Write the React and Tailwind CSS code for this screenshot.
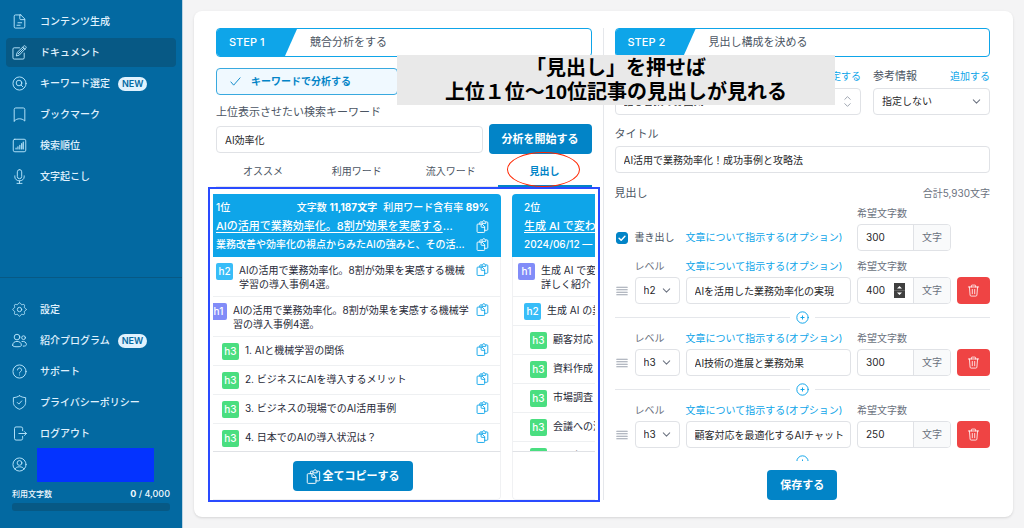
import { useId, useState } from "react";
import clsx from "clsx";

const Icon = ({ children, className = "w-[15px] h-[15px]", strokeWidth = 1.5 }) => (
  <svg
    viewBox="0 0 24 24"
    fill="none"
    stroke="currentColor"
    strokeWidth={strokeWidth}
    strokeLinecap="round"
    strokeLinejoin="round"
    className={`shrink-0 ${className}`}
    aria-hidden="true"
  >
    {children}
  </svg>
);

// eight-lobed cog outline
const cogPath =
  Array.from({ length: 96 }, (_, i) => {
    const t = (i / 96) * Math.PI * 2;
    const r = 9.6 + 1.2 * Math.cos(8 * t);
    return `${i ? "L" : "M"}${(12 + r * Math.cos(t)).toFixed(2)} ${(12 + r * Math.sin(t)).toFixed(2)}`;
  }).join("") + "Z";

const icons = {
  document: (
    <>
      <path d="M14 1.5H5.5A2 2 0 0 0 3.5 3.5v17a2 2 0 0 0 2 2h13a2 2 0 0 0 2-2V8L14 1.5Z" />
      <path d="M12.5 1.8v5.7a1.5 1.5 0 0 0 1.5 1.5h6" />
      <path d="M9.5 14h6M8 18h5" />
    </>
  ),
  edit: (
    <>
      <path d="M12 4.5H3.5a2 2 0 0 0-2 2v14a2 2 0 0 0 2 2h14a2 2 0 0 0 2-2V13" />
      <path d="m7 17 1.2-5L18.8 1.8a1.8 1.8 0 0 1 2.6 0l.7.7a1.8 1.8 0 0 1 0 2.6L12 15.8Z" />
      <path d="m17.5 3.5 3.5 3.5M10 14 19 5" />
    </>
  ),
  searchCircle: (
    <>
      <circle cx="12" cy="12" r="10.5" />
      <circle cx="11.2" cy="11.2" r="4.5" />
      <path d="m14.5 14.5 3 3" />
    </>
  ),
  bookmark: <path d="M3.5 22.5V4A2.5 2.5 0 0 1 6 1.5h12A2.5 2.5 0 0 1 20.5 4v18.5C18 20 15 18.8 12 18.8S6 20 3.5 22.5Z" />,
  chart: (
    <>
      <rect x="2" y="2" width="20" height="20" rx="2.5" />
      <path d="M6.5 17.5V16M9.5 17.5V14M12.500 17.5v-6M15.5 17.5V9M18 17.5v-11" strokeWidth="1.8" />
    </>
  ),
  mic: (
    <>
      <rect x="8.5" y="1" width="7" height="14.5" rx="3.5" />
      <path d="M4.5 11v1.500a7.5 6.5 0 0 0 15 0V11M12 19v4M8 23h8" />
    </>
  ),
  cog: (
    <>
      <path d={cogPath} />
      <circle cx="12" cy="12" r="3.5" />
    </>
  ),
  users: (
    <>
      <circle cx="8" cy="6.5" r="4.5" />
      <path d="M1 19.5c0-4 3-6 7-6s7 2 7 6c0 1.8-1.5 2.5-7 2.5s-7-.7-7-2.5Z" />
      <circle cx="18.5" cy="7.5" r="3" />
      <path d="M16 13.5c4-.8 7 1.5 7 5 0 1.8-1.5 2.5-5 2.5" />
    </>
  ),
  help: (
    <>
      <circle cx="12" cy="12" r="10.5" />
      <path d="M8.8 9.5a3.2 3.2 0 1 1 4.8 2.7c-1 .6-1.6 1.2-1.6 2.3M12 17.5v.1" />
    </>
  ),
  shield: (
    <>
      <path d="M12 1.2c2.8 1.8 6 2.8 9.8 3V12c0 5-4 8.500-9.800 10.800C6.2 20.5 2.2 17 2.2 12V4.200c3.800-.2 7-1.200 9.800-3Z" />
      <path d="m8.500 12 2.500 2.500 4.500-5" />
    </>
  ),
  logout: (
    <>
      <path d="M17 7.5V4a2.5 2.5 0 0 0-2.5-2.500H6.5A2.5 2.5 0 0 0 4 4v16a2.5 2.5 0 0 0 2.5 2.500h8A2.5 2.5 0 0 0 17 20v-3.500" />
      <path d="M11 12h12m-3-3 3 3-3 3" />
    </>
  ),
  userCircle: (
    <>
      <circle cx="12" cy="12" r="10.5" />
      <circle cx="12" cy="9.5" r="3.8" />
      <path d="M4.8 19.5c1-2.8 3.5-3.8 7.2-3.8s6.2 1 7.2 3.8" />
    </>
  ),
  copy: (
    <>
      <path d="M10.5 7.500H3.500A1.500 1.500 0 0 0 2 9v12.500A1.500 1.500 0 0 0 3.500 23h11a1.500 1.500 0 0 0 1.500-1.500V13Z" />
      <path d="M9.500 7.500v5a1 1 0 0 0 1 1H16" />
      <path d="M7 7.500V5a1.500 1.500 0 0 1 1.500-1.500H11M16 19h4a1.800 1.800 0 0 0 1.800-1.800V5a1.500 1.500 0 0 0-1.500-1.500H18" />
      <path d="M11 5.500c0-1.500.4-2.300 1.500-2.500.3-1.300 1-2 2-2s1.700.7 2 2c1.100.2 1.500 1 1.500 2.500Z" />
    </>
  ),
  trash: (
    <>
      <path d="M2.500 5.500h19M8 5.500v-2A1.500 1.500 0 0 1 9.500 2h5A1.500 1.500 0 0 1 16 3.500v2M4.500 5.500l1.200 15a2 2 0 0 0 2 1.800h8.600a2 2 0 0 0 2-1.800l1.200-15" />
      <path d="M9.800 10v8M14.200 10v8" />
    </>
  ),
  plus: (
    <>
      <circle cx="12" cy="12" r="10.5" />
      <path d="M12 9v6M9 12h6" />
    </>
  ),
};

const mainMenu = [
  { icon: "document", label: "コンテンツ生成" },
  { icon: "edit", label: "ドキュメント", active: true },
  { icon: "searchCircle", label: "キーワード選定", isNew: true },
  { icon: "bookmark", label: "ブックマーク" },
  { icon: "chart", label: "検索順位" },
  { icon: "mic", label: "文字起こし" },
];

const subMenu = [
  { icon: "cog", label: "設定" },
  { icon: "users", label: "紹介プログラム", isNew: true },
  { icon: "help", label: "サポート" },
  { icon: "shield", label: "プライバシーポリシー" },
  { icon: "logout", label: "ログアウト" },
];

const tabs = ["オススメ", "利用ワード", "流入ワード", "見出し"];

const articles = [
  {
    rank: "1位",
    count: "11,187文字",
    rate: "89%",
    title: "AIの活用で業務効率化。8割が効果を実感する",
    ellipsis: true,
    description: "業務改善や効率化の視点からみたAIの強みと、その活…",
    headings: [
      { level: "h2", text: "AIの活用で業務効率化。8割が効果を実感する機械\n学習の導入事例4選。" },
      { level: "h1", text: "AIの活用で業務効率化。8割が効果を実感する機械学\n習の導入事例4選。" },
      { level: "h3", text: "1. AIと機械学習の関係" },
      { level: "h3", text: "2. ビジネスにAIを導入するメリット" },
      { level: "h3", text: "3. ビジネスの現場でのAI活用事例" },
      { level: "h3", text: "4. 日本でのAIの導入状況は？" },
    ],
  },
  {
    rank: "2位",
    title: "生成 AI で変わ",
    description: "2024/06/12 — 生",
    headings: [
      { level: "h1", text: "生成 AI で変\n詳しく紹介" },
      { level: "h2", text: "生成 AI の業" },
      { level: "h3", text: "顧客対応" },
      { level: "h3", text: "資料作成" },
      { level: "h3", text: "市場調査" },
      { level: "h3", text: "会議への活" },
      { level: "h3", text: "マーケ" },
    ],
  },
];

const outline = [
  { level: "h2", text: "AIを活用した業務効率化の実現", count: 400, focused: true },
  { level: "h3", text: "AI技術の進展と業務効果", count: 300 },
  { level: "h3", text: "顧客対応を最適化するAIチャット", count: 250 },
];

const levelStyles = {
  h1: "ml-[6px] bg-[#818cf8]",
  h2: "ml-[12px] bg-[#38bdf8]",
  h3: "ml-[18px] bg-[#4ade80]",
};

const fieldClass =
  "block h-[27px] w-full min-w-0 rounded-[4px] border border-[#e0e2e6] bg-white pl-[8px] pr-[4px] text-[10px] text-[#27272a] outline-none";

const MenuItem = ({ icon, label, active, isNew }) => (
  <a
    href="#"
    className={clsx(
      "flex h-[29px] items-center gap-[13px] rounded-[4px] px-[6px] text-[10px] font-medium text-[#e0f2fe]",
      active && "bg-[#075985]"
    )}
  >
    <span className="text-[#bae6fd]">
      <Icon>{icons[icon]}</Icon>
    </span>
    <span className="flex items-center gap-[8px] whitespace-nowrap">
      {label}
      {isNew && (
        <span className="rounded-full bg-[#e0f2fe] px-[4px] text-[9px] font-semibold leading-[14px] text-[#0369a1]">
          NEW
        </span>
      )}
    </span>
  </a>
);

const Sidebar = () => (
  <aside className="flex w-[183px] shrink-0 flex-col justify-between border-r border-[#bcd3e2] bg-[#0369a1]">
    <nav className="flex flex-col gap-[2px] px-[6px] pt-[7px]">
      {mainMenu.map((item) => (
        <MenuItem key={item.label} {...item} />
      ))}
    </nav>
    <div className="border-t border-[#075985] px-[6px] pb-[17px] pt-[17px]">
      <nav className="flex flex-col gap-[2px]">
        {subMenu.map((item) => (
          <MenuItem key={item.label} {...item} />
        ))}
        <div className="flex h-[29px] items-center gap-[10px] pl-[6px] text-[#bae6fd]">
          <Icon>{icons.userCircle}</Icon>
          <div className="h-[34px] w-[117px] shrink-0 bg-[#0433ff]" />
        </div>
      </nav>
      <div className="mt-[8px] px-[6px]">
        <div className="flex items-center justify-between text-[9px] font-medium leading-[14px] text-[#f0f9ff]">
          <span className="text-[8px]">利用文字数</span>
          <span>
            <strong>0</strong> / 4,000
          </span>
        </div>
        <div className="mt-[2px] h-[8px] rounded-[3px] bg-[#075985]" />
      </div>
    </div>
  </aside>
);

const StepBar = ({ step, title }) => (
  <div className="flex h-[29px] shrink-0 overflow-hidden rounded-[4px] border border-[#0ea5e9] bg-white text-[11px]">
    <div className="w-[80px] bg-[#0ea5e9] pl-[12px] font-medium leading-[27px] text-white [clip-path:polygon(0_0,100%_0,85%_100%,0_100%)]">
      {step}
    </div>
    <div className="pl-[13px] leading-[27px] text-[#4b5563]">{title}</div>
  </div>
);

const PrimaryButton = ({ children, className = "" }) => (
  <button
    type="button"
    className={`flex h-[30px] shrink-0 items-center justify-center gap-[2px] whitespace-nowrap rounded-[4px] bg-[#0284c7] px-[13px] text-[11px] font-bold text-white ${className}`}
  >
    {children}
  </button>
);

const Chevron = () => (
  <Icon className="pointer-events-none absolute right-[8px] top-[8px] h-[11px] w-[11px] text-[#6b7280]" strokeWidth={2.2}>
    <path d="m5 8.500 7 7 7-7" />
  </Icon>
);

const CopyButton = ({ className }) => (
  <button type="button" aria-label="コピー" className={`shrink-0 ${className}`}>
    <Icon className="h-[13px] w-[13px]" strokeWidth={1.7}>
      {icons.copy}
    </Icon>
  </button>
);

const ArticleCard = ({ article }) => (
  <article className="flex w-[297px] shrink-0 flex-col overflow-hidden rounded-[4px] bg-white">
    <header className="h-[63px] shrink-0 bg-[#0ea5e9] px-[12px] pt-[5px] text-[10px] text-white">
      <div className="flex justify-between font-medium leading-[16px]">
        <span>{article.rank}</span>
        {article.count && (
          <span className="flex gap-[6px]">
            <span>
              文字数 <strong>{article.count}</strong>
            </span>
            <span>
              利用ワード含有率 <strong>{article.rate}</strong>
            </span>
          </span>
        )}
      </div>
      <div className="mt-[2px] flex items-center justify-between leading-[18px]">
        <span className="whitespace-nowrap text-[11px] font-medium">
          <a href="#" className="underline underline-offset-2">
            {article.title}
          </a>
          {article.ellipsis && "…"}
        </span>
        <CopyButton className="text-white" />
      </div>
      <div className="flex items-center justify-between font-medium leading-[18px]">
        <span className="whitespace-nowrap">{article.description}</span>
        <CopyButton className="text-white" />
      </div>
    </header>
    <ul className="min-h-0 flex-1 overflow-y-auto border-x border-b border-x-[#f0f1f3] border-b-[#e0e2e6] [scrollbar-width:none]">
      {article.headings.map((heading) => (
        <li
          key={heading.level + heading.text}
          className="-ml-px flex items-start border-b border-[#eef0f2] pb-[5px] pr-[11px] pt-[6px]"
        >
          <span
            className={`h-[17px] w-[17px] shrink-0 rounded-[2px] text-center text-[10px] font-medium leading-[17px] text-white ${levelStyles[heading.level]}`}
          >
            {heading.level}
          </span>
          <p className="min-w-0 flex-1 whitespace-pre pl-[6px] text-[10px] leading-[14px] text-[#1f2937]">
            {heading.text}
          </p>
          <CopyButton className="text-[#0ea5e9]" />
        </li>
      ))}
    </ul>
    <footer className="flex shrink-0 justify-center rounded-b-[4px] border-x border-b border-[#f0f1f3] pb-[8px] pt-[9px]">
      <PrimaryButton>
        <Icon className="h-[15px] w-[15px]">{icons.copy}</Icon>
        全てコピーする
      </PrimaryButton>
    </footer>
  </article>
);

const AnalysisColumn = () => {
  const [keyword, setKeyword] = useState("AI効率化");
  const [activeTab, setActiveTab] = useState("見出し");

  return (
    <section className="flex min-w-0 flex-1 flex-col">
      <StepBar step="STEP 1" title="競合分析をする" />
      <div className="mt-[11px] grid grid-cols-2 gap-[11px]">
        <button
          type="button"
          className="flex h-[27px] items-center gap-[10px] rounded-[4px] border border-[#38a9df] bg-[#f0f9ff] pl-[13px] text-[10px] font-bold text-[#0284c7]"
        >
          <Icon className="h-[11px] w-[11px]" strokeWidth={2}>
            <path d="m2 13 6 7L22 4" />
          </Icon>
          キーワードで分析する
        </button>
      </div>
      <label htmlFor="keyword" className="mt-[9px] text-[11px] leading-[16px] text-[#4b5563]">
        上位表示させたい検索キーワード
      </label>
      <div className="mt-[4px] flex items-center gap-[6px]">
        <input
          id="keyword"
          className={fieldClass}
          value={keyword}
          onChange={(e) => setKeyword(e.target.value)}
        />
        <PrimaryButton>分析を開始する</PrimaryButton>
      </div>
      <div className="grid shrink-0 grid-cols-4 border-b border-[#e5e7eb]">
        {tabs.map((tab) => (
          <button
            key={tab}
            type="button"
            onClick={() => setActiveTab(tab)}
            className={clsx(
              "relative -mb-px h-[33px] border-b-2 pt-[3px] text-[10px]",
              tab === activeTab
                ? "border-[#0284c7] font-bold text-[#0284c7]"
                : "border-transparent text-[#4b5563]"
            )}
          >
            {tab}
            {tab === "見出し" && (
              <span className="absolute -top-[2px] left-[9px] h-[35px] w-[73px] rounded-[50%] border border-[#ff2600]" />
            )}
          </button>
        ))}
      </div>
      <div className="relative -mx-[3px] mt-[7px] flex min-h-0 flex-1 flex-col">
        <div className="flex min-h-0 flex-1 overflow-hidden">
          <div className="-ml-[9px] flex min-h-0 gap-[11px]">
            {articles.map((article) => (
              <ArticleCard key={article.rank} article={article} />
            ))}
          </div>
        </div>
        <div className="pointer-events-none absolute -inset-x-[5px] -bottom-[2px] -top-[7px] border-2 border-[#2a4bff]" />
      </div>
    </section>
  );
};

const CountField = ({ id, value, focused }) => (
  <div className="relative flex h-[27px] overflow-hidden rounded-[4px] border border-[#e0e2e6]">
    <input
      id={id}
      inputMode="numeric"
      defaultValue={value}
      className="w-[55px] min-w-0 px-[8px] text-[10px] text-[#27272a] outline-none"
    />
    <span className="flex-1 border-l border-[#e0e2e6] bg-[#f9fafb] text-center text-[10px] leading-[25px] text-[#6b7280]">
      文字
    </span>
    {focused && (
      <svg viewBox="0 0 11 15" className="absolute left-[36px] top-[5px] h-[15px] w-[11px]" aria-hidden="true">
        <rect width="11" height="15" fill="#404040" />
        <path d="M0 7.5h11" stroke="#606060" />
        <path d="M3 5.500 5.500 3 8 5.500ZM3 9.500 5.500 12 8 9.500Z" fill="#fff" />
      </svg>
    )}
  </div>
);

const rowGrid = "grid grid-cols-[14px_45px_minmax(0,1fr)_94px_33px] gap-x-[6px] items-center";
const smallLabel = "text-[10px] leading-[15px] text-[#6b7280] whitespace-nowrap";
const linkClass = "text-[10px] leading-[15px] text-[#0ea5e9] whitespace-nowrap";

const OutlineRow = ({ item }) => {
  const id = useId();

  return (
    <>
      <div className={`${rowGrid} gap-y-[3px]`}>
        <label htmlFor={`${id}-level`} className={`${smallLabel} col-start-2`}>
          レベル
        </label>
        <a href="#" className={linkClass}>
          文章について指示する(オプション)
        </a>
        <label htmlFor={`${id}-count`} className={`${smallLabel} col-span-2`}>
          希望文字数
        </label>
        <Icon className="h-[14px] w-[14px] text-[#9ca3af]" strokeWidth={1.8}>
          <path d="M3 5.500h18M3 9.800h18M3 14.200h18M3 18.500h18" />
        </Icon>
        <div className="relative">
          <select id={`${id}-level`} defaultValue={item.level} className={`${fieldClass} appearance-none`}>
            <option>h1</option>
            <option>h2</option>
            <option>h3</option>
          </select>
          <Chevron />
        </div>
        <input aria-label="見出しテキスト" className={fieldClass} defaultValue={item.text} />
        <CountField id={`${id}-count`} value={item.count} focused={item.focused} />
        <button
          type="button"
          aria-label="削除"
          className="flex h-[27px] items-center justify-center rounded-[4px] bg-[#ef4444] text-white"
        >
          <Icon className="h-[13px] w-[13px]">{icons.trash}</Icon>
        </button>
      </div>
      <div className="flex h-[27px] items-center gap-[6px]">
        <hr className="flex-1 border-[#e5e7eb]" />
        <button type="button" aria-label="見出しを追加" className="text-[#0ea5e9]">
          <Icon className="h-[13px] w-[13px]" strokeWidth={1.8}>
            {icons.plus}
          </Icon>
        </button>
        <hr className="flex-1 border-[#e5e7eb]" />
      </div>
    </>
  );
};

const OutlineColumn = () => (
  <section className="flex min-w-0 flex-1 flex-col">
    <StepBar step="STEP 2" title="見出し構成を決める" />
    <div className="mt-[11px] flex gap-[12px]">
      <div className="flex-1">
        <div className="flex h-[16px] items-center justify-end">
          <a href="#" className={linkClass}>
            設定する
          </a>
        </div>
        <div className="relative mt-[4px]">
          <select aria-label="雰囲気" className={`${fieldClass} appearance-none`}>
            <option>話し言葉の雰囲気</option>
          </select>
          <Icon className="pointer-events-none absolute right-[7px] top-[7px] h-[13px] w-[13px] text-[#9ca3af]" strokeWidth={1.8}>
            <path d="m7 8 5-5 5 5M7 16l5 5 5-5" />
          </Icon>
        </div>
      </div>
      <div className="w-[117px]">
        <div className="flex h-[16px] items-center justify-between">
          <label htmlFor="reference" className="text-[11px] text-[#4b5563]">
            参考情報
          </label>
          <a href="#" className={linkClass}>
            追加する
          </a>
        </div>
        <div className="relative mt-[4px]">
          <select id="reference" className={`${fieldClass} appearance-none`}>
            <option>指定しない</option>
          </select>
          <Chevron />
        </div>
      </div>
    </div>
    <label htmlFor="title" className="mt-[11px] text-[11px] leading-[16px] text-[#4b5563]">
      タイトル
    </label>
    <input
      id="title"
      className={`${fieldClass} mt-[4px] shrink-0`}
      defaultValue="AI活用で業務効率化！成功事例と攻略法"
    />
    <div className="mt-[12px] flex items-center justify-between leading-[16px]">
      <h2 className="text-[11px] text-[#4b5563]">見出し</h2>
      <span className="text-[10px] text-[#6b7280]">合計5,930文字</span>
    </div>
    <div className="mt-[5px] min-h-0 flex-1 overflow-y-auto [scrollbar-width:none]">
      <div className={`${rowGrid} mb-[8px] gap-y-[3px]`}>
        <label htmlFor="lead-count" className={`${smallLabel} col-span-2 col-start-4`}>
          希望文字数
        </label>
        <span className="relative ml-px h-[12px] w-[12px]">
          <input
            id="lead"
            type="checkbox"
            defaultChecked
            className="block h-[12px] w-[12px] appearance-none rounded-[3px] border border-[#0284c7] checked:bg-[#0284c7]"
          />
          <Icon className="pointer-events-none absolute left-[1px] top-[1px] h-[10px] w-[10px] text-white" strokeWidth={3.5}>
            <path d="m5 12.500 5 5L19 8" />
          </Icon>
        </span>
        <label htmlFor="lead" className="whitespace-nowrap text-[10px] text-[#4b5563]">
          書き出し
        </label>
        <a href="#" className={linkClass}>
          文章について指示する(オプション)
        </a>
        <CountField id="lead-count" value={300} />
      </div>
      {outline.map((item) => (
        <OutlineRow key={item.text} item={item} />
      ))}
    </div>
    <PrimaryButton className="mt-[9px] self-center">保存する</PrimaryButton>
  </section>
);

const App = () => (
  <div className="relative flex h-screen font-['Inter','Noto_Sans_CJK_JP',sans-serif]">
    <Sidebar />
    <main className="flex min-w-0 flex-1 bg-[#f4f4f5] p-[11px]">
      <div className="flex min-w-0 flex-1 gap-[11px] rounded-lg bg-white py-[17px] pl-[22px] pr-[23px] shadow-sm">
        <AnalysisColumn />
        <div className="w-px shrink-0 bg-[#e5e7eb]" />
        <OutlineColumn />
      </div>
    </main>
    <div className="absolute left-[397px] top-[55px] h-[50px] w-[438px] bg-[#e9e9e9] pt-px text-center font-['Liberation_Sans','Noto_Sans_CJK_JP',sans-serif] text-[20px] font-bold leading-[24px] text-black">
      <p>「見出し」を押せば</p>
      <p>上位１位〜10位記事の見出しが見れる</p>
    </div>
  </div>
);

export default App;
